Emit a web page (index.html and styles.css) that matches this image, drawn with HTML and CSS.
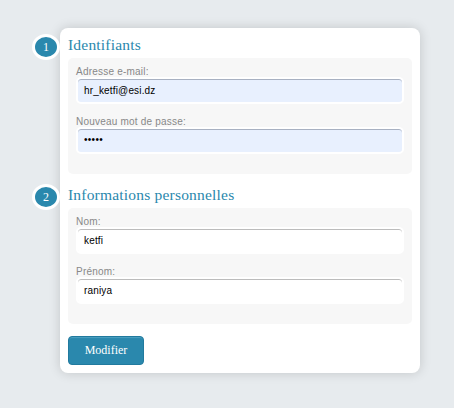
FILE: index.html
```html
<!DOCTYPE html>
<html lang="fr">
<head>
<meta charset="utf-8">
<title>Modifier le profil</title>
<link rel="stylesheet" href="styles.css">
</head>
<body>
<form class="card">
  <section>
    <h2 class="title title-first"><span class="number">1</span>Identifiants</h2>
    <div class="panel">
      <label class="label" for="email">Adresse e-mail:</label>
      <input class="field filled" id="email" type="text" value="hr_ketfi@esi.dz">
      <label class="label" for="pass">Nouveau mot de passe:</label>
      <input class="field filled password" id="pass" type="text" value="•••••">
    </div>
  </section>
  <section>
    <h2 class="title"><span class="number">2</span>Informations personnelles</h2>
    <div class="panel">
      <label class="label" for="nom">Nom:</label>
      <input class="field" id="nom" type="text" value="ketfi">
      <label class="label" for="prenom">Prénom:</label>
      <input class="field" id="prenom" type="text" value="raniya">
    </div>
  </section>
  <button class="submit" type="button">Modifier</button>
</form>
</body>
</html>
```

FILE: styles.css
```css
* { box-sizing: border-box; }

body {
  margin: 0;
  padding: 28px 34px 0 60px;
  height: 408px;
  overflow: hidden;
  background: #e7ebee;
  font-family: "Liberation Sans", Arial, sans-serif;
}

.card {
  width: 360px;
  height: 345px;
  padding: 0 8px;
  background: #fff;
  border-radius: 8px;
  box-shadow: 0 0 12px rgba(0, 0, 0, 0.16);
}

.title {
  position: relative;
  margin: 0;
  height: 34px;
  padding-top: 8px;
  font: 400 15.5px/26px "Liberation Serif", serif;
  letter-spacing: 0.2px;
  color: #2a88ad;
}

.title-first {
  height: 30px;
  padding-top: 4px;
}

.number {
  position: absolute;
  left: -36px;
  bottom: -2px;
  width: 28px;
  height: 26px;
  border: 3px solid #fff;
  border-radius: 50%;
  background: #2a88ad;
  color: #fff;
  font-size: 12px;
  line-height: 20px;
  letter-spacing: 0;
  text-align: center;
}

.panel {
  height: 116px;
  padding: 8px 8px 0;
  background: #f7f7f7;
  border-radius: 5px;
}

.label {
  display: block;
  height: 11px;
  font-size: 10px;
  line-height: 12px;
  letter-spacing: 0.21px;
  color: #888;
}

.field {
  display: block;
  width: 328px;
  height: 27px;
  margin: 0 0 12px;
  padding: 0 6px;
  border: 2px solid #fff;
  border-radius: 5px;
  outline: 0;
  background: #fff;
  box-shadow: inset 0 1px 0 #bcbcbc;
  font: 10px "Liberation Sans", Arial, sans-serif;
  letter-spacing: 0.16px;
  color: #000;
}

.filled {
  background: #e8f0fe;
  box-shadow: inset 0 1px 0 #a8b1c2;
}

.password {
  padding-bottom: 2px;
  letter-spacing: 0.3px;
}

.submit {
  display: block;
  width: 76px;
  height: 29px;
  margin: 12px 0 0;
  padding: 0;
  border: 1px solid #217a9e;
  border-radius: 4px;
  background: #2a88ad;
  box-shadow: inset 0 2px 1px -1px #4ba0c0;
  color: #fff;
  font: 12px "Liberation Serif", serif;
}
```
